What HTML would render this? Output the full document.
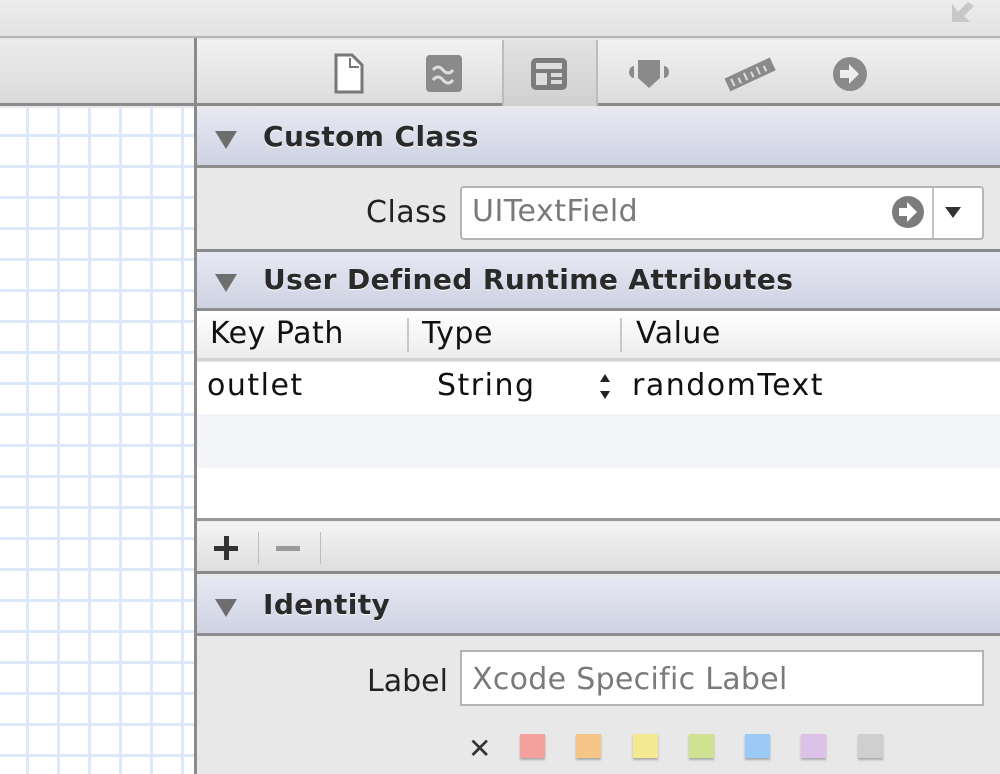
<!DOCTYPE html>
<html><head><meta charset="utf-8"><style>
*{margin:0;padding:0;box-sizing:border-box}
body{width:1000px;height:774px;overflow:hidden;position:relative;background:#e8e8e8;font-family:"DejaVu Sans","Liberation Sans",sans-serif;}
.abs{position:absolute}
.hdr{position:absolute;left:197px;width:803px;background:linear-gradient(#e6e8f3,#cfd2e2);border-bottom:3px solid #8e8e8e;}
.hdr .tri{position:absolute;left:18px;width:0;height:0;border-left:11px solid transparent;border-right:11px solid transparent;border-top:18px solid #6e6e6e}
.hdr span{position:absolute;left:66px;font-weight:bold;font-size:28px;color:#2a2a2a;letter-spacing:0.4px;text-shadow:0 1px 0 #fff}
.t{position:absolute;font-size:30px;color:#111;letter-spacing:1.5px}
</style></head><body>
<div class="abs" style="left:0;top:0;width:1000px;height:38px;background:linear-gradient(#ededed,#e2e2e2);border-bottom:2px solid #b5b5b5"></div>
<svg class="abs" style="left:948px;top:0" width="30" height="26"><path d="M4 4 L4 22 L22 22 L16 16 L26 6 L20 2 L10 12 Z" fill="#c8c8c8"/></svg>
<div class="abs" style="left:0;top:40px;width:194px;height:66px;background:linear-gradient(#ececec,#dadada);border-bottom:3px solid #8a8a8a"></div>
<div class="abs" style="left:0;top:108px;width:194px;height:666px;background-color:#fff;background-image:linear-gradient(90deg,transparent 26px,#dde9fb 26px,#dde9fb 29px,transparent 29px),linear-gradient(transparent 26px,#dde9fb 26px,#dde9fb 29px,transparent 29px);background-size:31px 31px;background-position:0 0,0 0"></div>
<div class="abs" style="left:194px;top:38px;width:3px;height:736px;background:#8a8a8a"></div>
<div class="abs" style="left:197px;top:40px;width:803px;height:66px;background:linear-gradient(#f2f2f2,#dcdcdc);border-bottom:3px solid #8a8a8a"></div>
<div class="abs" style="left:502px;top:40px;width:96px;height:66px;background:linear-gradient(#e2e2e2,#d0d0d0);border-left:2px solid #bcbcbc;border-right:2px solid #bcbcbc"></div>
<svg class="abs" style="left:197px;top:40px" width="803" height="66">
<path d="M139 15 H155 L165 25 V52 H139 Z" fill="#fff" stroke="#777" stroke-width="3"/><path d="M153 18 V27 H162" fill="none" stroke="#777" stroke-width="2"/>
<rect x="229" y="15" width="36" height="37" rx="4" fill="#8a8a8a"/><path d="M236 30 q5-6 10 0 t10 0 M236 40 q5-6 10 0 t10 0" fill="none" stroke="#ddd" stroke-width="3"/>
<rect x="334" y="18" width="36" height="32" rx="5" fill="#7c7c7c"/><rect x="339" y="23" width="26" height="6" fill="#ddd"/><rect x="339" y="33" width="11" height="12" fill="#ddd"/><rect x="354" y="33" width="11" height="4" fill="#ddd"/><rect x="354" y="40" width="11" height="4" fill="#ddd"/>
<path d="M441 20 H463 V38 L452 48 L441 38 Z" fill="#8a8a8a"/><path d="M437 26 a5 6 0 0 0 0 12 Z M467 26 a5 6 0 0 1 0 12 Z" fill="#8a8a8a"/>
<g transform="rotate(-25 554 34)"><rect x="528" y="27" width="50" height="14" fill="#8a8a8a"/><path d="M534 30 v8 M541 32 v6 M548 30 v8 M555 32 v6 M562 30 v8 M569 32 v6" stroke="#ddd" stroke-width="2"/></g>
<circle cx="653" cy="34" r="17" fill="#8a8a8a"/><path d="M643 30 H652 V24 L662 34 L652 44 V38 H643 Z" fill="#eee"/>
</svg>
<div class="hdr" style="top:109px;height:59px"><div class="tri" style="top:22px"></div><span style="top:11px">Custom Class</span></div>
<div class="abs" style="left:197px;top:168px;width:803px;height:84px;background:#e8e8e8;border-bottom:3px solid #8a8a8a"></div>
<div class="t" style="left:366px;top:195px;color:#222;letter-spacing:0.5px">Class</div>
<div class="abs" style="left:460px;top:186px;width:524px;height:54px;background:#fff;border:2px solid #b4b4b4;border-radius:4px"></div>
<div class="t" style="left:472px;top:194px;color:#7a7a7a;letter-spacing:0.5px">UITextField</div>
<div class="abs" style="left:932px;top:188px;width:2px;height:50px;background:#c4c4c4"></div>
<svg class="abs" style="left:888px;top:193px" width="90" height="40"><circle cx="20" cy="19" r="16" fill="#7c7c7c"/><path d="M11 15 H19 V9 L29 19 L19 29 V23 H11 Z" fill="#fff"/><path d="M57 14 H73 L65 25 Z" fill="#333"/></svg>
<div class="hdr" style="top:252px;height:59px"><div class="tri" style="top:22px"></div><span style="top:11px">User Defined Runtime Attributes</span></div>
<div class="abs" style="left:197px;top:311px;width:803px;height:50px;background:linear-gradient(#fff,#ececec);border-bottom:3px solid #d4d4d4"></div>
<div class="abs" style="left:407px;top:318px;width:2px;height:34px;background:#c8c8c8"></div>
<div class="abs" style="left:620px;top:318px;width:2px;height:34px;background:#c8c8c8"></div>
<div class="t" style="left:210px;top:316px;letter-spacing:0.5px">Key Path</div>
<div class="t" style="left:422px;top:316px;letter-spacing:0.5px">Type</div>
<div class="t" style="left:636px;top:316px;letter-spacing:0.5px">Value</div>
<div class="abs" style="left:197px;top:362px;width:803px;height:52px;background:#fff"></div>
<div class="abs" style="left:197px;top:414px;width:803px;height:54px;background:#f3f5f9"></div>
<div class="abs" style="left:197px;top:468px;width:803px;height:53px;background:#fff;border-bottom:3px solid #9a9a9a"></div>
<div class="t" style="left:207px;top:368px">outlet</div>
<div class="t" style="left:437px;top:368px">String</div>
<svg class="abs" style="left:597px;top:372px" width="16" height="30"><path d="M3 10 L8 2 L13 10 Z M3 19 L8 27 L13 19 Z" fill="#222"/></svg>
<div class="t" style="left:632px;top:368px">randomText</div>
<div class="abs" style="left:197px;top:522px;width:803px;height:52px;background:linear-gradient(#f4f4f4,#dedede);border-bottom:3px solid #8a8a8a"></div>
<div class="abs" style="left:214px;top:546px;width:24px;height:5px;background:#333"></div>
<div class="abs" style="left:224px;top:536px;width:5px;height:24px;background:#333"></div>
<div class="abs" style="left:258px;top:532px;width:1px;height:32px;background:#bbb"></div>
<div class="abs" style="left:276px;top:546px;width:24px;height:5px;background:#9a9a9a"></div>
<div class="abs" style="left:320px;top:532px;width:1px;height:32px;background:#bbb"></div>
<div class="hdr" style="top:577px;height:59px"><div class="tri" style="top:22px"></div><span style="top:11px">Identity</span></div>
<div class="t" style="left:367px;top:664px;color:#222;letter-spacing:0px">Label</div>
<div class="abs" style="left:460px;top:650px;width:524px;height:56px;background:#fff;border:2px solid #b4b4b4"></div>
<div class="t" style="left:472px;top:662px;color:#7a7a7a;letter-spacing:0.3px">Xcode Specific Label</div>
<div class="abs" style="left:468px;top:732px;font-size:28px;font-weight:bold;color:#333">✕</div>
<div class="abs" style="left:520px;top:734px;width:25px;height:24px;background:#f4a09c;box-shadow:0 2px 2px #aaa"></div>
<div class="abs" style="left:576px;top:734px;width:25px;height:24px;background:#f6c688;box-shadow:0 2px 2px #aaa"></div>
<div class="abs" style="left:633px;top:734px;width:25px;height:24px;background:#f4e890;box-shadow:0 2px 2px #aaa"></div>
<div class="abs" style="left:689px;top:734px;width:25px;height:24px;background:#cfe290;box-shadow:0 2px 2px #aaa"></div>
<div class="abs" style="left:745px;top:734px;width:25px;height:24px;background:#9ccaf6;box-shadow:0 2px 2px #aaa"></div>
<div class="abs" style="left:801px;top:734px;width:25px;height:24px;background:#dcc2e8;box-shadow:0 2px 2px #aaa"></div>
<div class="abs" style="left:858px;top:734px;width:25px;height:24px;background:#cfcfcf;box-shadow:0 2px 2px #aaa"></div>
</body></html>
